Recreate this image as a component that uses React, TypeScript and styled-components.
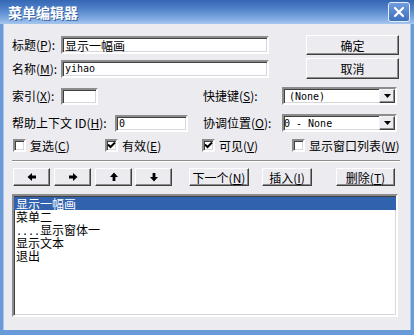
import React from "react";
import styled, { createGlobalStyle } from "styled-components";

const GlobalStyle = createGlobalStyle`
  html, body {
    margin: 0;
    padding: 0;
    background: #ffffff;
  }
  body {
    font-family: "Noto Sans CJK SC", "Noto Sans", sans-serif;
    font-size: 12px;
    color: #000;
  }
`;

const FACE = "#ecebf0";

const Window = styled.div`
  width: 414px;
  height: 335px;
  box-sizing: border-box;
  display: flex;
  flex-direction: column;
  background: #6a9ad8;
`;

const TitleBar = styled.div`
  height: 24px;
  flex-shrink: 0;
  display: flex;
  align-items: center;
  justify-content: space-between;
  padding: 0 4px 0 8px;
  background: linear-gradient(#3566b3 0%, #4f80c8 35%, #7ba7df 75%, #a6c6ee 100%);
`;

const Title = styled.span`
  color: #fff;
  font-weight: bold;
  font-size: 14px;
  text-shadow: 1px 1px 0 #35609f;
`;

const CloseBtn = styled.div`
  width: 20px;
  height: 18px;
  border: 1px solid #e4eefb;
  border-radius: 3px;
  background: linear-gradient(#6f9cdc, #3f70bd);
  display: flex;
  align-items: center;
  justify-content: center;
`;

const Body = styled.div`
  flex: 1;
  margin: 0 3px 5px 3px;
  background: ${FACE};
  padding: 11px 0 0 9px;
  display: flex;
  flex-direction: column;
  box-shadow: inset 1px 0 #a9c7ee, inset -1px 0 #a9c7ee;
`;

const Row = styled.div<{ $h: number; $mt: number }>`
  display: flex;
  align-items: center;
  height: ${(p) => p.$h}px;
  margin-top: ${(p) => p.$mt}px;
  flex-shrink: 0;
`;

const Label = styled.span<{ $w: number; $ml?: number }>`
  width: ${(p) => p.$w}px;
  margin-left: ${(p) => p.$ml ?? 0}px;
  flex-shrink: 0;
  white-space: nowrap;
  line-height: 14px;
`;

const Key = styled.span`
  text-decoration: underline;
`;

const sunken = `
  box-sizing: border-box;
  border-style: solid;
  border-width: 2px;
  border-color: #8c8c8c #ffffff #ffffff #8c8c8c;
  box-shadow: inset 1px 1px #404040, inset -1px -1px #d8d6dc;
  background: #fff;
`;

const raised = `
  box-sizing: border-box;
  border-style: solid;
  border-width: 1px;
  border-color: #ffffff #404040 #404040 #ffffff;
  box-shadow: inset -1px -1px #8c8c8c;
  background: ${FACE};
`;

const TextBox = styled.div<{ $w: number; $h: number }>`
  ${sunken}
  width: ${(p) => p.$w}px;
  height: ${(p) => p.$h}px;
  flex-shrink: 0;
  display: flex;
  align-items: center;
  padding-left: 2px;
  font-family: "DejaVu Sans Mono", "Noto Sans CJK SC", monospace;
  font-size: 10px;
  white-space: nowrap;
  overflow: hidden;
`;

const CjkText = styled.span`
  font-family: "Noto Sans CJK SC", sans-serif;
  font-size: 12px;
`;

const Combo = styled(TextBox)`
  padding-left: 0;
  justify-content: space-between;
`;

const ComboText = styled.span<{ $pl: number }>`
  padding-left: ${(p) => p.$pl}px;
`;

const DropBtn = styled.div`
  ${raised}
  width: 16px;
  height: 100%;
  display: flex;
  align-items: center;
  justify-content: center;
  border-color: #f4f4f6 #404040 #404040 #f4f4f6;
`;

const PushButton = styled.div<{ $w: number; $ml?: number; $h: number }>`
  ${raised}
  width: ${(p) => p.$w}px;
  height: ${(p) => p.$h}px;
  margin-left: ${(p) => p.$ml ?? 0}px;
  flex-shrink: 0;
  display: flex;
  align-items: center;
  justify-content: center;
  white-space: nowrap;
`;

const CheckItem = styled.div<{ $w: number; $ml?: number }>`
  display: flex;
  align-items: center;
  gap: 4px;
  width: ${(p) => p.$w}px;
  margin-left: ${(p) => p.$ml ?? 0}px;
  flex-shrink: 0;
  white-space: nowrap;
`;

const Box = styled.div`
  ${sunken}
  width: 13px;
  height: 13px;
  flex-shrink: 0;
  display: flex;
  align-items: center;
  justify-content: center;
`;

const Separator = styled.div`
  height: 1px;
  width: 388px;
  margin-top: 8px;
  background: #8c8c8c;
  border-bottom: 1px solid #fff;
  flex-shrink: 0;
`;

const ListBox = styled.div`
  ${sunken}
  width: 386px;
  height: 123px;
  margin-top: 8px;
  flex-shrink: 0;
  padding-top: 1px;
`;

const ListItem = styled.div<{ $selected?: boolean }>`
  height: 13px;
  line-height: 13px;
  padding-left: 2px;
  white-space: nowrap;
  background: ${(p) => (p.$selected ? "#3162ad" : "transparent")};
  color: ${(p) => (p.$selected ? "#fff" : "#000")};
`;

const Dots = styled.span`
  font-family: "DejaVu Sans Mono", monospace;
  font-size: 10px;
`;

const Check = () => (
  <svg width="9" height="9" viewBox="0 0 9 9">
    <path d="M1 3.5 L3.5 6 L8 1.5" stroke="#000" strokeWidth="2" fill="none" />
  </svg>
);

const DownTri = () => (
  <svg width="7" height="4" viewBox="0 0 7 4">
    <path d="M0 0 H7 L3.5 4 Z" fill="#000" />
  </svg>
);

const Arrow = ({ dir }: { dir: "left" | "right" | "up" | "down" }) => {
  const rot = { right: 0, down: 90, left: 180, up: 270 }[dir];
  return (
    <svg width="10" height="10" viewBox="0 0 10 10">
      <g transform={`rotate(${rot} 5 5)`}>
        <path d="M1 3.6 H5 V1 L9.5 5 L5 9 V6.4 H1 Z" fill="#000" />
      </g>
    </svg>
  );
};

const CloseX = () => (
  <svg width="12" height="12" viewBox="0 0 12 12">
    <path d="M2 2 L10 10 M10 2 L2 10" stroke="#fff" strokeWidth="2.2" strokeLinecap="round" />
  </svg>
);

const items: { text: string; indent?: boolean }[] = [
  { text: "显示一幅画" },
  { text: "菜单二" },
  { text: "显示窗体一", indent: true },
  { text: "显示文本" },
  { text: "退出" },
];

export default function App() {
  return (
    <>
      <GlobalStyle />
      <Window>
        <TitleBar>
          <Title>菜单编辑器</Title>
          <CloseBtn>
            <CloseX />
          </CloseBtn>
        </TitleBar>
        <Body>
          <Row $h={20} $mt={0}>
            <Label $w={49}>
              标题(<Key>P</Key>):
            </Label>
            <TextBox $w={208} $h={18}>
              <CjkText>显示一幅画</CjkText>
            </TextBox>
            <PushButton $w={93} $h={20} $ml={37}>
              确定
            </PushButton>
          </Row>
          <Row $h={21} $mt={3}>
            <Label $w={49}>
              名称(<Key>M</Key>):
            </Label>
            <TextBox $w={208} $h={18}>
              yihao
            </TextBox>
            <PushButton $w={93} $h={21} $ml={37}>
              取消
            </PushButton>
          </Row>
          <Row $h={18} $mt={8}>
            <Label $w={49}>
              索引(<Key>X</Key>):
            </Label>
            <TextBox $w={37} $h={17} />
            <Label $w={79} $ml={105}>
              快捷键(<Key>S</Key>):
            </Label>
            <Combo $w={115} $h={18}>
              <ComboText $pl={5}>(None)</ComboText>
              <DropBtn>
                <DownTri />
              </DropBtn>
            </Combo>
          </Row>
          <Row $h={18} $mt={9}>
            <Label $w={103}>
              帮助上下文 ID(<Key>H</Key>):
            </Label>
            <TextBox $w={73} $h={17}>
              0
            </TextBox>
            <Label $w={79} $ml={15}>
              协调位置(<Key>O</Key>):
            </Label>
            <Combo $w={115} $h={18}>
              <ComboText $pl={0}>0 - None</ComboText>
              <DropBtn>
                <DownTri />
              </DropBtn>
            </Combo>
          </Row>
          <Row $h={14} $mt={6}>
            <CheckItem $w={92} $ml={1}>
              <Box />
              <span>
                复选(<Key>C</Key>)
              </span>
            </CheckItem>
            <CheckItem $w={97}>
              <Box>
                <Check />
              </Box>
              <span>
                有效(<Key>E</Key>)
              </span>
            </CheckItem>
            <CheckItem $w={90}>
              <Box>
                <Check />
              </Box>
              <span>
                可见(<Key>V</Key>)
              </span>
            </CheckItem>
            <CheckItem $w={110}>
              <Box />
              <span>
                显示窗口列表(<Key>W</Key>)
              </span>
            </CheckItem>
          </Row>
          <Separator />
          <Row $h={18} $mt={6}>
            <PushButton $w={37} $h={18} $ml={1}>
              <Arrow dir="left" />
            </PushButton>
            <PushButton $w={37} $h={18} $ml={4}>
              <Arrow dir="right" />
            </PushButton>
            <PushButton $w={37} $h={18} $ml={4}>
              <Arrow dir="up" />
            </PushButton>
            <PushButton $w={37} $h={18} $ml={3}>
              <Arrow dir="down" />
            </PushButton>
            <PushButton $w={60} $h={18} $ml={17}>
              下一个(<Key>N</Key>)
            </PushButton>
            <PushButton $w={50} $h={18} $ml={13}>
              插入(<Key>I</Key>)
            </PushButton>
            <PushButton $w={59} $h={18} $ml={24}>
              删除(<Key>T</Key>)
            </PushButton>
          </Row>
          <ListBox>
            {items.map((it, i) => (
              <ListItem key={i} $selected={i === 0}>
                {it.indent && <Dots>....</Dots>}
                {it.text}
              </ListItem>
            ))}
          </ListBox>
        </Body>
      </Window>
    </>
  );
}
